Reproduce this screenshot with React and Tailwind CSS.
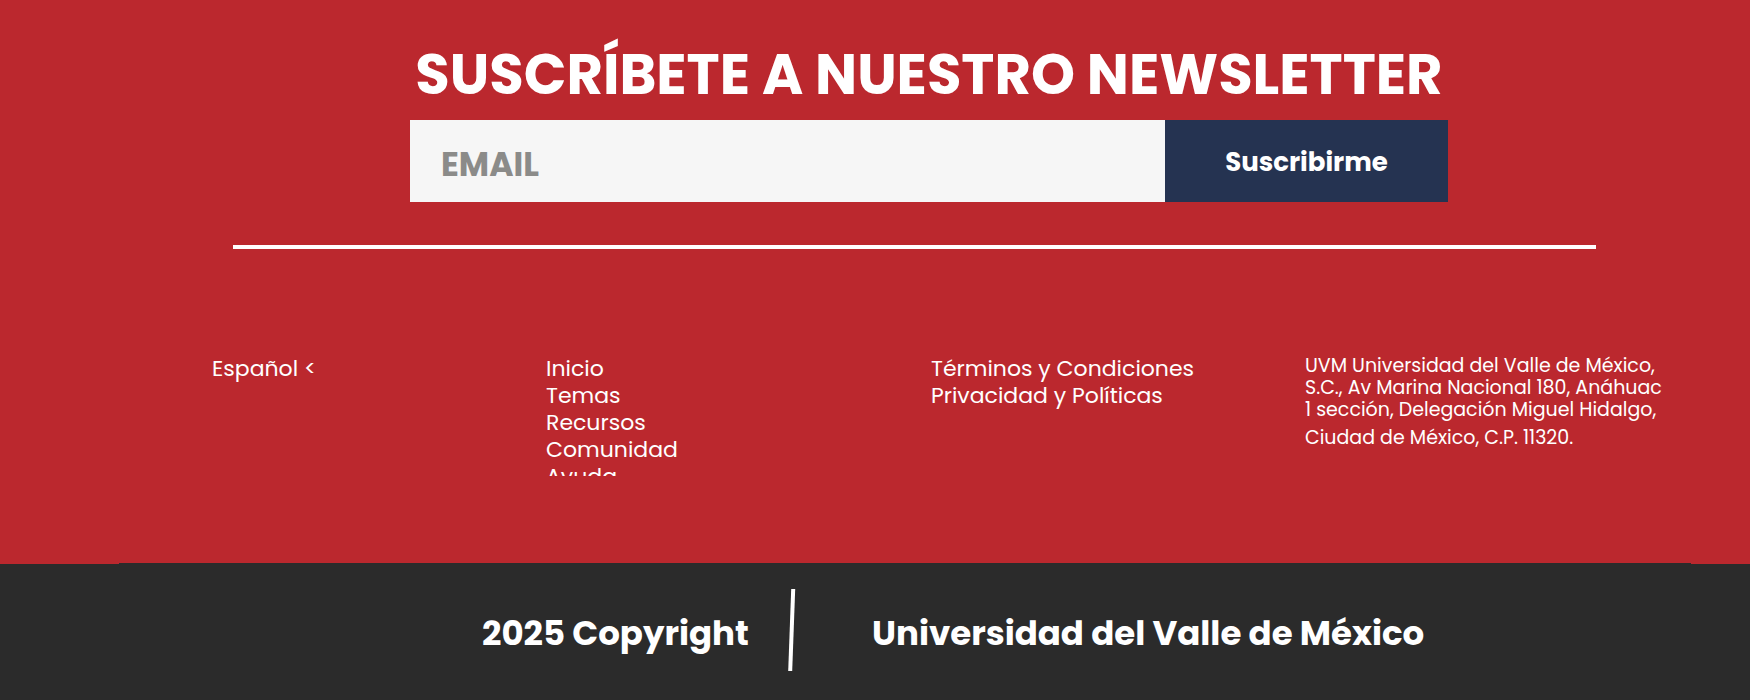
const siteLinks = ["Inicio", "Temas", "Recursos", "Comunidad", "Ayuda"];
const legalLinks = ["Términos y Condiciones", "Privacidad y Políticas"];

function LinkList({ items, label }) {
  return (
    <nav aria-label={label}>
      <ul>
        {items.map((item) => (
          <li key={item}>
            <a href="#" className="whitespace-nowrap">{item}</a>
          </li>
        ))}
      </ul>
    </nav>
  );
}

function Newsletter() {
  return (
    <section className="pt-[39px] pr-[302px] pl-[410px]">
      <h2 className="text-center text-[56px] leading-[72px] font-bold whitespace-nowrap">
        SUSCRÍBETE A NUESTRO NEWSLETTER
      </h2>
      <form className="mt-[9px] flex h-[82px]" onSubmit={(e) => e.preventDefault()}>
        <input
          type="email"
          aria-label="Email"
          placeholder="EMAIL"
          className="min-w-0 flex-1 bg-[#f6f6f6] px-[31px] pt-2 text-[33px] font-bold text-[#333] outline-none placeholder:text-[#8b8b89]"
        />
        <button type="submit" className="w-[283px] bg-[#253351] pt-0.5 text-[26px] font-bold">
          Suscribirme
        </button>
      </form>
    </section>
  );
}

export default function App() {
  return (
    <footer className="flex min-h-screen flex-col bg-[#bb282e] font-['Poppins','Inter',sans-serif] text-white">
      <Newsletter />
      <hr className="mt-[43px] mr-[154px] ml-[233px] border-0 border-t-4 border-white" />
      <div className="mt-[106px] grid h-[121px] grid-cols-[334fr_385fr_374fr_360fr] overflow-hidden pr-[85px] pl-[212px] text-[22px] leading-[27px]">
        <div>
          <button type="button">Español &lt;</button>
        </div>
        <LinkList items={siteLinks} label="Sitio" />
        <LinkList items={legalLinks} label="Legal" />
        <address className="text-[19px] whitespace-nowrap not-italic">
          <p className="leading-[22px]">
            UVM Universidad del Valle de México,
            <br />
            S.C., Av Marina Nacional 180, Anáhuac
            <br />
            1 sección, Delegación Miguel Hidalgo,
          </p>
          <p className="pt-[3px]">Ciudad de México, C.P. 11320.</p>
        </address>
      </div>
      <div className="mt-[87px] mr-[59px] ml-[119px] h-px bg-[#2b2b2b]" />
      <div className="flex flex-1 items-start bg-[#2b2b2b] pt-6 pl-[482px] text-[34px] leading-[90px] font-bold whitespace-nowrap">
        <p className="w-[306px]">2025 Copyright</p>
        <svg width="8" height="84" viewBox="0 0 8 84" aria-hidden="true">
          <path d="M5.2 1 L2.2 83" stroke="#fff" strokeWidth="4" fill="none" />
        </svg>
        <p className="pl-[76px]">Universidad del Valle de México</p>
      </div>
    </footer>
  );
}
